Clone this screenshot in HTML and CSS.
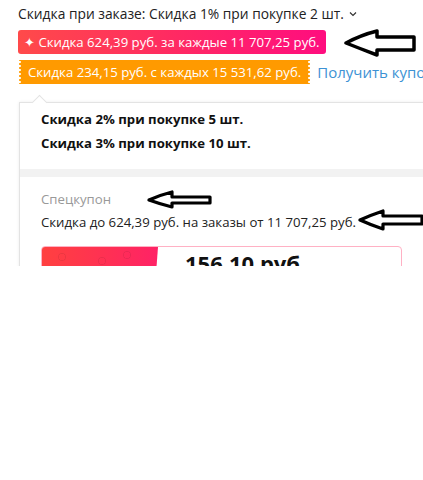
FILE: index.html
```html
<!DOCTYPE html>
<html lang="ru">
<head>
<meta charset="utf-8">
<link rel="stylesheet" href="styles.css">
</head>
<body>
<div class="page">
  <div class="title"><span>Скидка при заказе: Скидка 1% при покупке 2 шт.</span><svg class="chev" width="8" height="6" viewBox="0 0 8 6"><path d="M1 1.5 L4 4.5 L7 1.5" fill="none" stroke="#333" stroke-width="1.2"/></svg></div>
  <div class="badge-row first">
    <span class="badge red">✦ Скидка 624,39 руб. за каждые 11 707,25 руб.</span>
  </div>
  <div class="badge-row">
    <span class="badge orange">Скидка 234,15 руб. с каждых 15 531,62 руб.</span>
    <a class="get">Получить купон</a>
  </div>
  <div class="popup">
    <div class="tiers">
      <div class="tier">Скидка 2% при покупке 5 шт.</div>
      <div class="tier">Скидка 3% при покупке 10 шт.</div>
    </div>
    <div class="sep"></div>
    <div class="special">
      <div class="label">Спецкупон</div>
      <div class="desc">Скидка до 624,39 руб. на заказы от 11 707,25 руб.</div>
      <div class="card">
        <div class="card-left"></div>
        <div class="price">156,10 руб.</div>
      </div>
    </div>
  </div>
  <svg class="arrow a1" width="74" height="28" viewBox="0 0 74 28"><path d="M3 14 Q18 6 34 2 L34 8 L71 8 L71 21 L34 21 L34 26 Q18 20 3 14 Z" fill="#fff" stroke="#000" stroke-width="3.5" stroke-linejoin="round"/></svg>
  <svg class="arrow a2" width="66" height="19" viewBox="0 0 66 19"><path d="M2 10 Q13 5 25 2 L25 7 L63 7 L63 13 L25 13 L25 17 Q13 14 2 10 Z" fill="#fff" stroke="#000" stroke-width="3.2" stroke-linejoin="round"/></svg>
  <svg class="arrow a3" width="66" height="22" viewBox="0 0 66 22"><path d="M2 11 Q13 6 25 2 L25 7 L64 7 L64 15 L25 15 L25 20 Q13 16 2 11 Z" fill="#fff" stroke="#000" stroke-width="3.2" stroke-linejoin="round"/></svg>
</div>
</body>
</html>
```
FILE: styles.css
```css
html, body {
  margin: 0;
  padding: 0;
  overflow: hidden;
  background: #fff;
}
body {
  font-family: "Open Sans", "Noto Sans", sans-serif;
  color: #333;
  font-size: 13.2px;
}
.page {
  position: relative;
  height: 266px;
  overflow: hidden;
  padding: 4px 0 0 18px;
  box-sizing: border-box;
}
.title {
  display: flex;
  align-items: center;
  height: 18px;
  font-size: 13.8px;
  color: #222;
  white-space: nowrap;
}
.chev {
  margin-left: 5px;
  margin-top: 2px;
}
.badge-row {
  display: flex;
  align-items: center;
  height: 24px;
  margin-top: 6px;
  white-space: nowrap;
}
.badge-row.first {
  margin-top: 8px;
}
.badge {
  display: block;
  height: 24px;
  line-height: 24px;
  color: #fff;
  font-size: 13.2px;
  box-sizing: border-box;
  position: relative;
}
.red {
  background: linear-gradient(90deg, #ff4a4a 0%, #ff2a62 50%, #ff0d7f 100%);
  border-radius: 3px;
  padding: 0 6px 0 6px;
}
.orange {
  background: #ff9a00;
  margin-left: 1px;
  padding: 0 9px;
}
.orange::before, .orange::after {
  content: "";
  position: absolute;
  top: 0;
  bottom: 0;
  width: 3px;
  background-image: radial-gradient(circle at 50% 50%, #fff 1px, transparent 1.6px);
  background-size: 3px 4px;
}
.orange::before { left: -1px; }
.orange::after { right: -1px; }
.get {
  color: #3d92d4;
  font-size: 15px;
  margin-left: 7px;
}
.popup {
  position: relative;
  margin-top: 18px;
  margin-left: 1px;
  width: 520px;
  border: 1px solid #e3e3e3;
  box-shadow: 0 0 3px rgba(0,0,0,0.08);
  background: #fff;
}
.popup::before {
  content: "";
  position: absolute;
  left: 14px;
  top: -6px;
  width: 10px;
  height: 10px;
  background: #fff;
  border-left: 1px solid #e3e3e3;
  border-top: 1px solid #e3e3e3;
  transform: rotate(45deg);
}
.tiers {
  padding: 4px 21px 14px;
}
.tier {
  font-weight: 700;
  line-height: 24px;
  color: #111;
}
.sep {
  height: 8px;
  background: #f2f2f2;
}
.special {
  padding: 11px 21px 0;
}
.label {
  color: #999;
  line-height: 22px;
}
.desc {
  color: #222;
  line-height: 24px;
}
.card {
  margin-top: 12px;
  width: 361px;
  height: 80px;
  border: 1px solid #ffb1c4;
  border-radius: 4px;
  display: flex;
  overflow: hidden;
  box-sizing: border-box;
}
.card-left {
  width: 116px;
  flex: none;
  background:
    radial-gradient(circle at 20px 10px, transparent 3px, rgba(0,0,0,0.08) 3.5px, transparent 4.5px),
    radial-gradient(circle at 60px 14px, transparent 3px, rgba(0,0,0,0.08) 3.5px, transparent 4.5px),
    radial-gradient(circle at 85px 8px, transparent 3px, rgba(0,0,0,0.08) 3.5px, transparent 4.5px),
    linear-gradient(90deg, #ff4040 0%, #ff2f55 60%, #ff2266 100%);
  clip-path: polygon(0 0, 100% 0, 95% 100%, 0 100%);
}
.price {
  font-size: 22px;
  font-weight: 700;
  color: #111;
  margin-left: 27px;
  margin-top: 1px;
  line-height: 30px;
  white-space: nowrap;
}
.arrow {
  position: absolute;
}
.a1 { left: 343px; top: 29px; }
.a2 { left: 147px; top: 190px; }
.a3 { left: 358px; top: 209px; }
```
